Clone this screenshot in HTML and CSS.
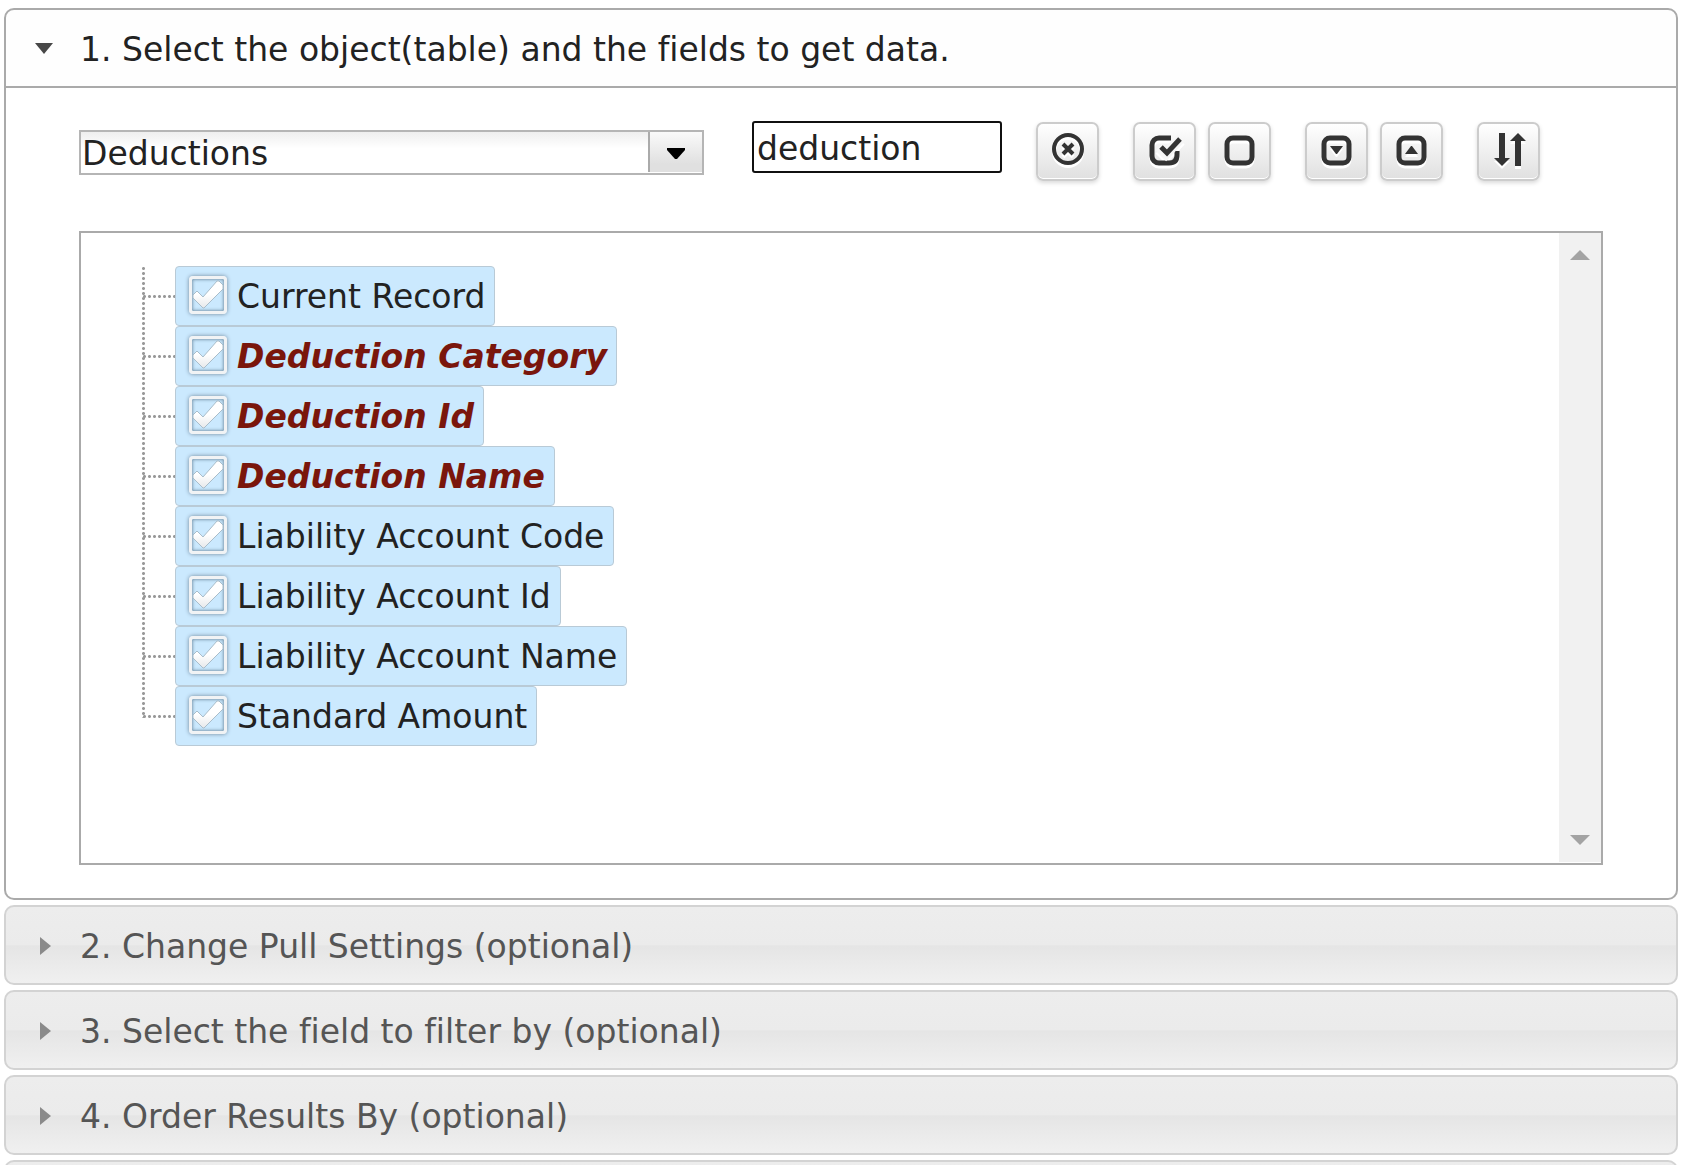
FILE: index.html
```html
<!DOCTYPE html>
<html lang="en">

<head>
    <meta charset="UTF-8">
    <meta name="viewport" content="width=device-width, initial-scale=1.0">
    <title>Pull Data</title>
    <link rel="stylesheet" href="styles.css">
</head>

<body>
    <!--shared tick shape-->
    <svg class="sprite" aria-hidden="true">
        <defs>
            <linearGradient id="tickFill" x1="0" y1="0" x2="0" y2="1">
                <stop offset="0.5" stop-color="#fff" />
                <stop offset="1" stop-color="#e6e8ea" />
            </linearGradient>
        </defs>
        <symbol id="tick" viewBox="0 0 40 40">
            <path d="M5 20l4-4 6 6L29 6h2l4 4v4L16 33h-1L5 23z" fill="url(#tickFill)" stroke="#a9bdca" stroke-width="1" />
        </symbol>
    </svg>

    <div class="accordion">
        <!--step 1-->
        <h3 class="header active">
            <button type="button" aria-expanded="true">
                <svg class="arrow" width="20" height="20" viewBox="0 0 20 20"><path d="M1 4h18l-9 11z" fill="#484848" /></svg>
                <span>1. Select the object(table) and the fields to get data.</span>
            </button>
        </h3>
        <div class="panel">
            <div class="toolbar">
                <div class="combo">
                    <select aria-label="Object">
                        <option>Deductions</option>
                    </select>
                    <span class="combo-arrow">
                        <svg width="18" height="12" viewBox="0 0 18 12"><path d="M0 1h18v2l-8 9H8L0 3z" fill="#000" /></svg>
                    </span>
                </div>
                <input class="search" type="text" value="deduction" aria-label="Search fields">
                <div class="group">
                    <button type="button" class="btn" aria-label="Clear">
                        <svg width="36" height="36" viewBox="0 0 36 36" fill="none" stroke="#333">
                            <circle cx="18" cy="15" r="14" stroke-width="4" />
                            <path d="M13 10l10 10M23 10L13 20" stroke-width="4" />
                        </svg>
                    </button>
                </div>
                <div class="group">
                    <button type="button" class="btn" aria-label="Select all">
                        <svg width="36" height="36" viewBox="0 0 36 36" fill="none" stroke="#333" stroke-width="5">
                            <path d="M24 4H12a7 7 0 0 0-7 7v11a7 7 0 0 0 7 7h10q8 0 8-8v-4" />
                            <path d="M12 13l7 7L34 4" stroke="#f6f6f6" stroke-width="10" />
                            <path d="M14 13l6 6L33 5" />
                        </svg>
                    </button>
                    <button type="button" class="btn" aria-label="Select none">
                        <svg width="36" height="36" viewBox="0 0 36 36" fill="none" stroke="#333" stroke-width="5">
                            <rect x="5" y="4" width="25" height="25" rx="6" />
                        </svg>
                    </button>
                </div>
                <div class="group">
                    <button type="button" class="btn" aria-label="Expand all">
                        <svg width="36" height="36" viewBox="0 0 36 36" fill="none" stroke="#333" stroke-width="5">
                            <rect x="5" y="4" width="25" height="25" rx="6" />
                            <path d="M11 12h13l-6 8h-1z" fill="#333" stroke="none" />
                        </svg>
                    </button>
                    <button type="button" class="btn" aria-label="Collapse all">
                        <svg width="36" height="36" viewBox="0 0 36 36" fill="none" stroke="#333" stroke-width="5">
                            <rect x="5" y="4" width="25" height="25" rx="6" />
                            <path d="M11 20h13l-6-8h-1z" fill="#333" stroke="none" />
                        </svg>
                    </button>
                </div>
                <div class="group">
                    <button type="button" class="btn" aria-label="Sort">
                        <svg width="36" height="36" viewBox="0 0 36 36" fill="#333">
                            <path d="M8-1h6v25h5l-8 8-8-8h5z" />
                            <path d="M24 32h6V7h5l-8-8-8 8h5z" />
                        </svg>
                    </button>
                </div>
            </div>

            <!--field list-->
            <div class="tree-box">
                <ul class="tree">
                    <li><label class="node"><span class="check"><input type="checkbox" checked><svg><use href="#tick" /></svg></span>Current Record</label></li>
                    <li><label class="node match"><span class="check"><input type="checkbox" checked><svg><use href="#tick" /></svg></span>Deduction Category</label></li>
                    <li><label class="node match"><span class="check"><input type="checkbox" checked><svg><use href="#tick" /></svg></span>Deduction Id</label></li>
                    <li><label class="node match"><span class="check"><input type="checkbox" checked><svg><use href="#tick" /></svg></span>Deduction Name</label></li>
                    <li><label class="node"><span class="check"><input type="checkbox" checked><svg><use href="#tick" /></svg></span>Liability Account Code</label></li>
                    <li><label class="node"><span class="check"><input type="checkbox" checked><svg><use href="#tick" /></svg></span>Liability Account Id</label></li>
                    <li><label class="node"><span class="check"><input type="checkbox" checked><svg><use href="#tick" /></svg></span>Liability Account Name</label></li>
                    <li><label class="node"><span class="check"><input type="checkbox" checked><svg><use href="#tick" /></svg></span>Standard Amount</label></li>
                </ul>
                <div class="scrollbar">
                    <svg width="20" height="10" viewBox="0 0 20 10"><path d="M0 10L10 0l10 10z" fill="#a3a3a3" /></svg>
                    <svg width="20" height="10" viewBox="0 0 20 10"><path d="M0 0h20L10 10z" fill="#a3a3a3" /></svg>
                </div>
            </div>
        </div>

        <!--step 2-->
        <h3 class="header">
            <button type="button" aria-expanded="false">
                <svg class="arrow" width="20" height="20" viewBox="0 0 20 20"><path d="M6 1l11 9-11 9z" fill="#8a8a8a" /></svg>
                <span>2. Change Pull Settings (optional)</span>
            </button>
        </h3>
        <!--step 3-->
        <h3 class="header">
            <button type="button" aria-expanded="false">
                <svg class="arrow" width="20" height="20" viewBox="0 0 20 20"><path d="M6 1l11 9-11 9z" fill="#8a8a8a" /></svg>
                <span>3. Select the field to filter by (optional)</span>
            </button>
        </h3>
        <!--step 4-->
        <h3 class="header">
            <button type="button" aria-expanded="false">
                <svg class="arrow" width="20" height="20" viewBox="0 0 20 20"><path d="M6 1l11 9-11 9z" fill="#8a8a8a" /></svg>
                <span>4. Order Results By (optional)</span>
            </button>
        </h3>
        <!--next step, below the fold-->
        <h3 class="header">
            <button type="button" aria-expanded="false" aria-label="Next step"></button>
        </h3>
    </div>
</body>

</html>
```
FILE: styles.css
```css
* {
    box-sizing: border-box;
}

body {
    margin: 0;
    padding: 8px 5px 0 4px;
    height: 100vh;
    overflow: hidden;
    background-color: #fff;
    color: #222;
    font-family: Verdana, "DejaVu Sans", sans-serif;
    font-size: 33px;
    font-variant-ligatures: none;
}

button,
input,
select {
    font: inherit;
    color: inherit;
}

.sprite {
    position: absolute;
    width: 0;
    height: 0;
}

/*accordion*/
.header {
    margin: 0 0 5px;
    font-weight: normal;
    font-size: 33px;
}

.header button {
    display: flex;
    align-items: center;
    gap: 26px;
    width: 100%;
    height: 80px;
    padding: 2px 28px 0;
    border: 2px solid #d3d3d3;
    border-radius: 10px;
    background: linear-gradient(#ededed 0, #ebebeb 50%, #e5e5e5 51%, #f0f0f0 100%);
    color: #555;
    font-variant-ligatures: none;
    text-align: left;
    cursor: pointer;
}

.header.active {
    margin: 0;
}

.header.active button {
    border-color: #aaa;
    border-radius: 10px 10px 0 0;
    background: #fefefe;
    color: #222;
}

.panel {
    margin-bottom: 5px;
    padding: 33px 73px;
    border: 2px solid #aaa;
    border-top: 0;
    border-radius: 0 0 10px 10px;
}

.toolbar {
    display: flex;
    align-items: flex-start;
    gap: 34px;
    margin-bottom: 50px;
}

/*object drop-down*/
.combo {
    position: relative;
    width: 625px;
    height: 45px;
    margin: 9px 14px 0 0;
    border: 2px solid #b5b5b5;
}

.combo select {
    width: 100%;
    height: 100%;
    padding: 1px 60px 0 1px;
    border: 0;
    appearance: none;
    background: linear-gradient(#eee, #fff 40%);
}

.combo-arrow {
    position: absolute;
    top: 0;
    right: 0;
    bottom: 1px;
    display: flex;
    align-items: center;
    justify-content: center;
    width: 54px;
    padding-top: 2px;
    border-left: 2px solid #aaa;
    background: linear-gradient(#fafafa, #e0e0e0 80%);
    pointer-events: none;
}

.search {
    width: 250px;
    height: 52px;
    padding: 2px 3px 0;
    border: 2px solid #101010;
    border-radius: 3px;
    outline: 0;
}

.group {
    display: flex;
    gap: 12px;
    margin-top: 1px;
}

.btn {
    display: flex;
    align-items: center;
    justify-content: center;
    width: 63px;
    height: 59px;
    padding: 0;
    border: 2px solid #ccc;
    border-radius: 7px;
    background: linear-gradient(#fff, #e0e0e0);
    box-shadow: inset 0 -1px 0 #fff, 0 2px 4px rgba(0, 0, 0, 0.15);
    cursor: pointer;
}

/*white edge under the glyphs*/
.btn svg {
    overflow: visible;
    filter: drop-shadow(0 3px 0 #fff);
}

/*field tree*/
.tree-box {
    display: flex;
    justify-content: space-between;
    height: 634px;
    border: 2px solid #aaa;
}

.tree {
    margin: 0;
    padding: 33px 0 0 61px;
    list-style: none;
}

.tree li {
    position: relative;
    height: 60px;
    padding-left: 33px;
}

/*dotted connectors*/
.tree li::before {
    content: "";
    position: absolute;
    left: 0;
    top: 0;
    bottom: 0;
    width: 3px;
    background: radial-gradient(circle, #999 1px, transparent 2px) 0 0 / 3px 5px;
}

.tree li:last-child::before {
    bottom: 28px;
}

.tree li::after {
    content: "";
    position: absolute;
    left: 0;
    top: 29px;
    width: 33px;
    height: 3px;
    background: radial-gradient(circle, #999 1px, transparent 2px) 0 0 / 5px 3px;
}

.node {
    display: inline-flex;
    align-items: center;
    gap: 9px;
    height: 60px;
    padding: 1px 9px 0 12px;
    border: 1px solid #b9cad6;
    border-radius: 4px;
    background-color: #cbe9fe;
    white-space: nowrap;
}

.node.match {
    color: #7a160c;
    font-weight: bold;
    font-style: italic;
}

.check {
    position: relative;
    width: 40px;
    height: 40px;
    margin-bottom: 4px;
}

.check input {
    display: block;
    width: 38px;
    height: 38px;
    margin: 1px;
    border: 3px solid #f1f3f5;
    border-radius: 4px;
    appearance: none;
    box-shadow: 0 0 4px #71879a, inset 0 0 3px 1px #7f9db2;
}

.check svg {
    position: absolute;
    left: 0;
    top: 0;
    width: 40px;
    height: 40px;
    pointer-events: none;
}

.scrollbar {
    display: flex;
    flex-direction: column;
    align-items: center;
    justify-content: space-between;
    width: 42px;
    margin-bottom: 1px;
    padding: 17px 0;
    background-color: #f1f1f1;
}
```
